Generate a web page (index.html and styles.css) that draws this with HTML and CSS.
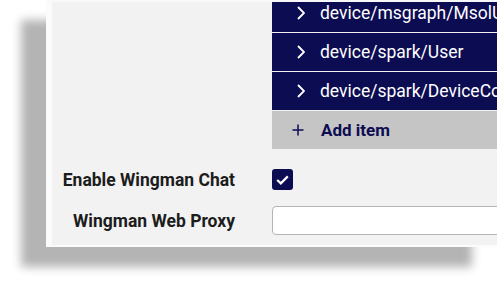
FILE: index.html
```html
<!DOCTYPE html>
<html>
  <head>
    <link rel="stylesheet" href="styles.css">
  </head>
  <body>
    <div class="stage">
      <div class="panel">
        <div class="form">
          <div class="label-cell"></div>
          <div class="list">
            <div class="list-item">
              <svg class="chevron" width="8" height="14" viewBox="0 0 8 14"><polyline points="1,1 7,7 1,13" fill="none" stroke="#fff" stroke-width="1.8"/></svg>
              <span>device/msgraph/MsolUser</span>
            </div>
            <div class="list-item">
              <svg class="chevron" width="8" height="14" viewBox="0 0 8 14"><polyline points="1,1 7,7 1,13" fill="none" stroke="#fff" stroke-width="1.8"/></svg>
              <span>device/spark/User</span>
            </div>
            <div class="list-item">
              <svg class="chevron" width="8" height="14" viewBox="0 0 8 14"><polyline points="1,1 7,7 1,13" fill="none" stroke="#fff" stroke-width="1.8"/></svg>
              <span>device/spark/DeviceConfig</span>
            </div>
            <div class="add-item">
              <svg class="plus" width="12" height="12" viewBox="0 0 12 12"><path d="M6 0.5V11.5M0.5 6H11.5" stroke="#0c0c52" stroke-width="1.5"/></svg>
              <span>Add item</span>
            </div>
          </div>

          <div class="label-cell field-label check-label">Enable Wingman Chat</div>
          <div class="control check-control">
            <div class="checkbox">
              <svg width="13" height="10" viewBox="0 0 13 10"><polyline points="1.2,5 4.8,8.4 11.8,1.4" fill="none" stroke="#fff" stroke-width="2.2"/></svg>
            </div>
          </div>

          <div class="label-cell field-label proxy-label">Wingman Web Proxy</div>
          <div class="control proxy-control">
            <div class="text-input"></div>
          </div>
        </div>
      </div>
    </div>
  </body>
</html>
```

FILE: styles.css
```css
body {
    margin: 0;
    background: #ffffff;
    font-family: 'Roboto', 'Liberation Sans', sans-serif;
    overflow: hidden;
}
.stage {
    width: 501px;
    height: 286px;
    padding-left: 46px;
    box-sizing: border-box;
}
.panel {
    width: 451px;
    height: 247px;
    box-sizing: border-box;
    background: #f2f2f2;
    border-left: 6px solid #fbfbfb;
    border-top: 2px solid #f8f8f8;
    border-bottom: 2px solid #fbfbfb;
    box-shadow: -25px 20px 9px 0 #b4b4b4;
    overflow: hidden;
}
.form {
    display: grid;
    grid-template-columns: 183px 1fr; /* labels end at 235, controls start at 272 */
    column-gap: 37px;
    align-items: center;
}
.list {
    margin-top: -8px;
    display: flex;
    flex-direction: column;
    gap: 1px;
}
.list-item {
    height: 38px;
    background: #0c0c52;
    color: #ffffff;
    display: flex;
    align-items: center;
    font-size: 17.5px;
    white-space: nowrap;
    overflow: hidden;
    padding-left: 25px;
}
.chevron {
    margin-right: 15px;
    flex: none;
}
.add-item {
    height: 38px;
    background: #c5c5c5;
    color: #0c0c52;
    display: flex;
    align-items: center;
    font-size: 17px;
    font-weight: bold;
    padding-left: 20px;
}
.plus {
    margin-right: 17px;
}
.field-label {
    text-align: right;
    font-size: 17.5px;
    font-weight: bold;
    color: #1c1c1c;
    white-space: nowrap;
}
.check-label,
.check-control {
    margin-top: 20px;
}
.proxy-label,
.proxy-control {
    margin-top: 16px;
}
.checkbox {
    width: 21px;
    height: 21px;
    border-radius: 3px;
    background: #0c0c52;
    display: flex;
    align-items: center;
    justify-content: center;
}
.text-input {
    height: 29px;
    box-sizing: border-box;
    width: 240px;
    background: #ffffff;
    border: 1px solid #b4b4b4;
    border-radius: 4px;
}
```
